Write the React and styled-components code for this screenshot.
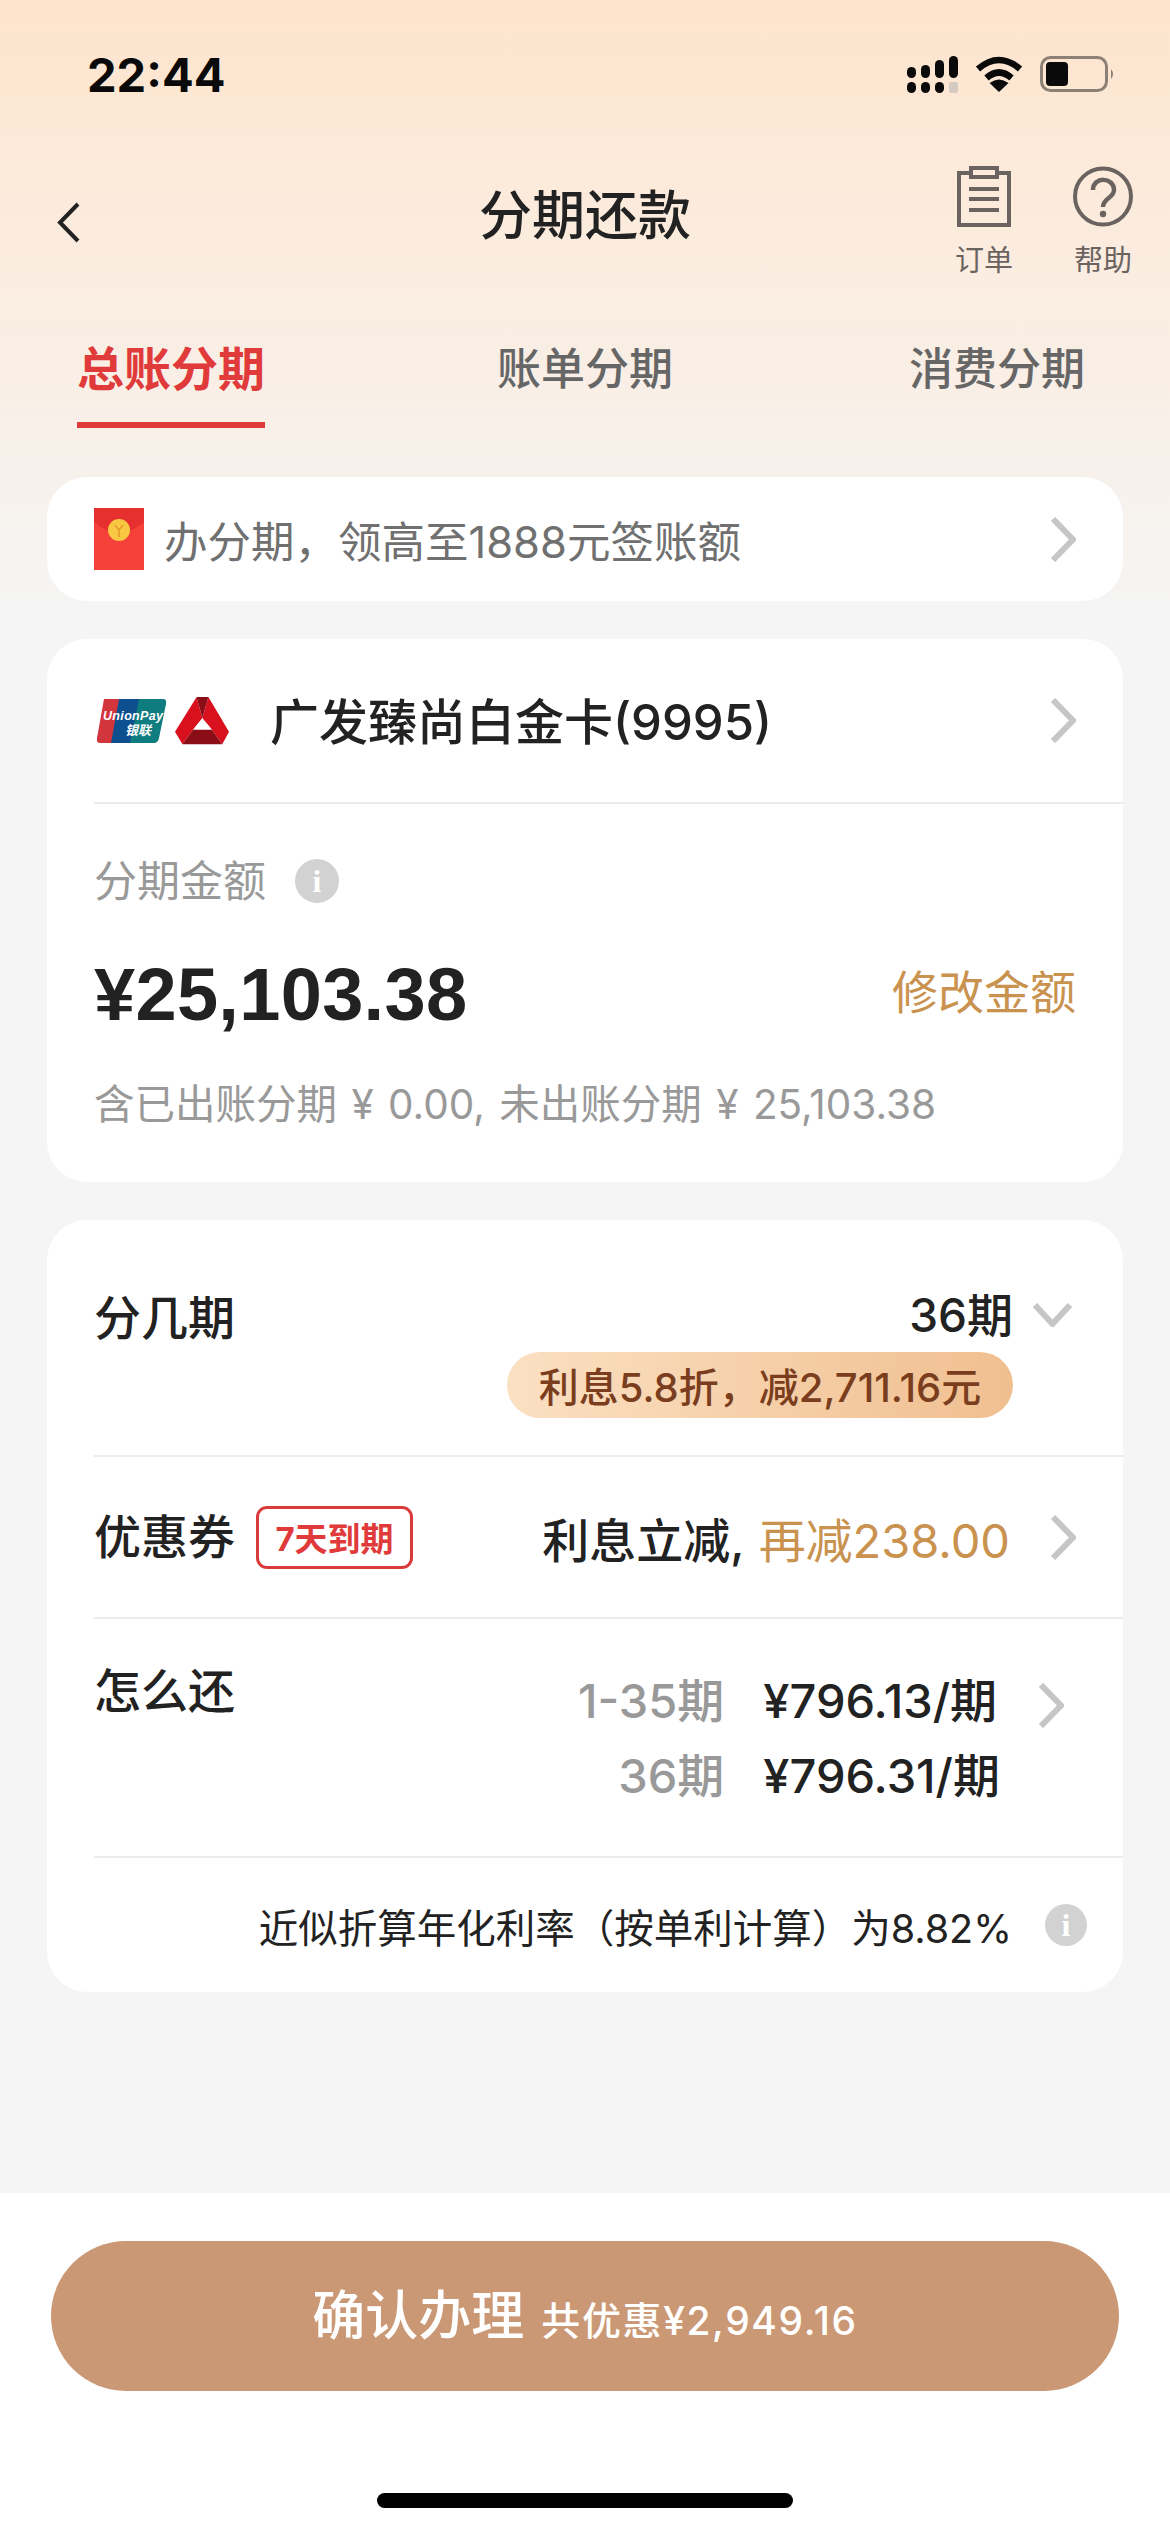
import React from 'react';
import styled, { createGlobalStyle } from 'styled-components';

const GlobalStyle = createGlobalStyle`
  html, body { margin: 0; padding: 0; background: #f5f5f5; }
  * { box-sizing: border-box; }
  body { font-family: Inter, "Noto Sans CJK SC", sans-serif; color: #222; }
`;

const Page = styled.div`
  width: 1170px;
  height: 2532px;
  display: flex;
  flex-direction: column;
  background: linear-gradient(#fde4cc 0, #fcebdc 200px, #f8f0e9 430px, #f5f5f5 620px);
`;

const StatusBar = styled.div`
  height: 148px;
  display: flex;
  align-items: center;
  justify-content: space-between;
  padding: 0 55px 0 87px;
`;

const Clock = styled.div`
  font-size: 47px;
  font-weight: 700;
  color: #0a0a0a;
`;

const StatusIcons = styled.div`
  display: flex;
  align-items: center;
  gap: 17px;
`;

const NavBar = styled.div`
  height: 134px;
  display: grid;
  grid-template-columns: 1fr auto 1fr;
  align-items: center;
  padding: 0 38px;
`;

const BackButton = styled.div`
  margin: 14px 0 0 19px;
`;

const Title = styled.div`
  margin-bottom: 6px;
  font-size: 53px;
  font-weight: 500;
  color: #222;
`;

const NavActions = styled.div`
  align-self: start;
  padding-top: 18px;
  display: flex;
  justify-content: flex-end;
  gap: 61px;
`;

const NavAction = styled.div`
  width: 58px;
  display: flex;
  flex-direction: column;
  align-items: center;
  gap: 18px;
  font-size: 29px;
  line-height: 32px;
  color: #6b6360;
`;

const Tabs = styled.div`
  display: flex;
  padding-left: 77px;
`;

const Tab = styled.div`
  height: 146px;
  margin-left: ${p => p.$gap || 0}px;
  padding-top: 64px;
  line-height: 46px;
  font-size: ${p => (p.$active ? 47 : 44)}px;
  font-weight: ${p => (p.$active ? 700 : 500)};
  color: ${p => (p.$active ? '#e03a3a' : '#666')};
  border-bottom: 6px solid ${p => (p.$active ? '#e03a3a' : 'transparent')};
`;

const Content = styled.div`
  flex: 1;
  display: flex;
  flex-direction: column;
  gap: 38px;
  padding: 49px 47px 0;
`;

const Card = styled.div`
  background: #fff;
  border-radius: 40px;
  padding-left: ${p => (p.$flush ? 47 : 0)}px;
`;

const PromoRow = styled.div`
  height: 124px;
  display: flex;
  align-items: center;
  padding: 0 47px;
  font-size: 43.5px;
  color: #707070;
`;

const PromoText = styled.div`
  flex: 1;
  margin-left: 20px;
`;

const BankRow = styled.div`
  height: 165px;
  display: flex;
  align-items: center;
  padding: 0 47px 0 3px;
  border-bottom: 2px solid #ececec;
`;

const Logos = styled.div`
  display: flex;
  align-items: center;
  gap: 8px;
  margin-right: 41px;
`;

const BankName = styled.div`
  flex: 1;
  margin-top: -4px;
  font-size: 49px;
  font-weight: 500;
  color: #222;
`;

const AmountBox = styled.div`
  padding: 55px 47px 55px 0;
`;

const LabelRow = styled.div`
  display: flex;
  align-items: center;
  gap: 29px;
  font-size: 43px;
  line-height: 44px;
  color: #999;
`;

const InfoDot = styled.span`
  flex: none;
  width: ${p => p.$size}px;
  height: ${p => p.$size}px;
  border-radius: 50%;
  background: #d2d2d2;
  color: #fff;
  display: flex;
  align-items: center;
  justify-content: center;
  font-family: "Liberation Serif", serif;
  font-weight: 700;
  font-size: 32px;
`;

const AmountRow = styled.div`
  display: flex;
  align-items: center;
  justify-content: space-between;
  margin-top: 46px;
  height: 80px;
`;

const Amount = styled.div`
  padding-top: 10px;
  font-family: "Liberation Sans", sans-serif;
  font-size: 74px;
  font-weight: 700;
  letter-spacing: 0.3px;
  color: #222;
`;

const EditLink = styled.div`
  font-size: 46px;
  color: #c9924f;
`;

const AmountNote = styled.div`
  margin-top: 54px;
  font-size: 40.5px;
  word-spacing: 3px;
  line-height: 44px;
  color: #999;
  white-space: nowrap;
`;

const RowLabel = styled.div`
  font-size: 47px;
  font-weight: 500;
  line-height: 50px;
  color: #222;
`;

const TermRow = styled.div`
  display: flex;
  justify-content: space-between;
  padding: 70px 51px 37px 0;
  border-bottom: 2px solid #ececec;
`;

const TermLabel = styled(RowLabel)`
  margin-top: 3px;
`;

const TermValue = styled.div`
  display: flex;
  flex-direction: column;
  align-items: flex-end;
`;

const TermLine = styled.div`
  display: flex;
  align-items: center;
  gap: 20px;
  font-size: 46px;
  font-weight: 500;
  line-height: 50px;
`;

const DiscountPill = styled.div`
  margin-top: 12px;
  margin-right: 59px;
  height: 66px;
  width: 506px;
  border-radius: 33px;
  display: flex;
  align-items: center;
  justify-content: center;
  font-size: 40px;
  font-weight: 500;
  color: #7a3e1e;
  background: linear-gradient(90deg, #fbe0c2, #f0bf90);
`;

const CouponRow = styled.div`
  height: 162px;
  display: flex;
  align-items: center;
  padding-right: 47px;
  border-bottom: 2px solid #ececec;
`;

const ExpiryBadge = styled.div`
  margin-left: 21px;
  width: 157px;
  height: 63px;
  border: 3px solid #d93b3b;
  border-radius: 11px;
  display: flex;
  align-items: center;
  justify-content: center;
  font-size: 33px;
  font-weight: 700;
  color: #e03a3a;
`;

const CouponValue = styled.div`
  margin-left: auto;
  margin-right: 40px;
  font-size: 47px;
  font-weight: 500;
  color: #222;
`;

const CouponSaving = styled.span`
  margin-left: 14px;
  font-weight: 400;
  color: #c9924f;
`;

const RepayRow = styled.div`
  height: 239px;
  display: flex;
  padding: 47px 59px 0 0;
  border-bottom: 2px solid #ececec;
`;

const RepayGrid = styled.div`
  margin: 10px 38px 0 auto;
  display: grid;
  grid-template-columns: auto auto;
  grid-auto-rows: 75px;
  column-gap: 39px;
  font-size: 47px;
  line-height: 50px;
  font-weight: 500;
`;

const RepayPeriod = styled.div`
  text-align: right;
  color: #999;
`;

const RepayAmount = styled.div`
  color: #222;
`;

const RepayChevron = styled.div`
  margin-top: 17px;
`;

const RateRow = styled.div`
  height: 134px;
  display: flex;
  align-items: center;
  justify-content: flex-end;
  gap: 33px;
  padding-right: 36px;
  font-size: 39.5px;
  color: #222;
`;

const BottomBar = styled.div`
  height: 339px;
  background: #fff;
  padding: 48px 51px 0;
`;

const ConfirmButton = styled.div`
  height: 150px;
  border-radius: 75px;
  background: #cb9875;
  color: #fff;
  display: flex;
  align-items: baseline;
  justify-content: center;
  gap: 17px;
  line-height: 150px;
  font-size: 39px;
  font-weight: 500;
  letter-spacing: 1.6px;
`;

const ConfirmLabel = styled.span`
  font-size: 53px;
  letter-spacing: 0;
`;

const HomeIndicator = styled.div`
  width: 416px;
  height: 15px;
  margin: 102px auto 0;
  border-radius: 8px;
  background: #000;
`;

const Chevron = ({ dir = 'right', size = 45 }) => {
  const isDown = dir === 'down';
  return (
    <svg
      width={isDown ? 39 : 26}
      height={isDown ? 24 : size}
      viewBox={isDown ? '0 0 39 24' : '0 0 26 45'}
      fill="none"
      stroke="#c6c6c6"
      strokeWidth="6"
      style={{ flex: 'none', display: 'block' }}
    >
      {isDown ? <path d="M2 2 L19.5 21 L37 2" /> : <path d="M3 2 L23 22.5 L3 43" />}
    </svg>
  );
};

const SignalIcon = () => (
  <svg width="51" height="37" viewBox="0 0 51 37" style={{ display: 'block' }}>
    <rect x="0" y="11" width="9" height="11" rx="4.5" fill="#0a0a0a" />
    <rect x="14" y="9" width="9" height="13" rx="4.5" fill="#0a0a0a" />
    <rect x="28" y="4" width="9" height="18" rx="4.5" fill="#0a0a0a" />
    <rect x="42" y="0" width="9" height="22" rx="4.5" fill="#0a0a0a" />
    <rect x="0" y="26" width="9" height="11" rx="4.5" fill="#0a0a0a" />
    <rect x="14" y="26" width="9" height="11" rx="4.5" fill="#0a0a0a" />
    <rect x="28" y="26" width="9" height="11" rx="4.5" fill="#0a0a0a" />
    <rect x="42" y="26" width="9" height="11" rx="2" fill="#d4cbc3" />
  </svg>
);

const WifiIcon = () => (
  <svg width="48" height="36" viewBox="0 0 48 36" fill="none" style={{ display: 'block' }}>
    <path d="M3 13 Q24 -5 45 13" stroke="#0a0a0a" strokeWidth="6.5" />
    <path d="M11.5 22 Q24 11 36.5 22" stroke="#0a0a0a" strokeWidth="6.5" />
    <path d="M24 36 L14.5 27 Q24 20 33.5 27 Z" fill="#0a0a0a" />
  </svg>
);

const BatteryIcon = () => (
  <svg width="75" height="36" viewBox="0 0 75 36" style={{ display: 'block' }}>
    <rect x="1.5" y="1.5" width="65" height="33" rx="9" fill="none" stroke="#8d8074" strokeWidth="3" />
    <rect x="6" y="6" width="22" height="24" rx="4" fill="#0a0a0a" />
    <path d="M71 13 Q75 18 71 23 Z" fill="#8d8074" />
  </svg>
);

const BackIcon = () => (
  <svg width="23" height="41" viewBox="0 0 23 41" fill="none" stroke="#222" strokeWidth="4" style={{ display: 'block' }}>
    <path d="M21 2 L3 20.5 L21 39" />
  </svg>
);

const OrderIcon = () => (
  <svg width="54" height="61" viewBox="0 0 54 61" fill="none" stroke="#6b6360" strokeWidth="4" style={{ flex: 'none', display: 'block' }}>
    <path d="M14 7 H2 V59 H52 V7 H40" />
    <rect x="14" y="2" width="26" height="9" />
    <path d="M12 23 H42 M12 33 H42 M12 44 H42" />
  </svg>
);

const HelpIcon = () => (
  <svg width="60" height="61" viewBox="0 0 60 61" fill="none" stroke="#6b6360" strokeWidth="4" style={{ flex: 'none', display: 'block' }}>
    <circle cx="30" cy="30.5" r="28" />
    <path d="M20 24 C20 10 41 11 41 24 C41 32 30 32 30 41" strokeWidth="4.5" />
    <circle cx="30" cy="48" r="3.2" fill="#6b6360" stroke="none" />
  </svg>
);

const RedPacket = () => (
  <svg width="50" height="62" viewBox="0 0 50 62" style={{ display: 'block', flex: 'none' }}>
    <rect width="50" height="62" fill="#f6413b" />
    <path d="M0 0 H50 V14 Q25 36 0 14 Z" fill="#e5302f" />
    <circle cx="25" cy="22" r="11" fill="#f9c843" />
    <path d="M21 17 L25 22 L29 17 M25 22 V29" stroke="#e89a2a" strokeWidth="1.6" fill="none" />
  </svg>
);

const UnionPayLogo = () => (
  <svg width="70" height="44" viewBox="0 0 70 44" style={{ display: 'block' }}>
    <path d="M7 0 H30 L22 44 H3 Q-1 44 0 39 Z" fill="#d2353c" />
    <path d="M22 0 H48 L40 44 H14 Z" fill="#0d4f8f" />
    <path d="M42 0 H66 Q70 0 69 5 L62 39 Q61 44 57 44 H33 Z" fill="#0f7c80" />
    <text x="6" y="21" fontFamily="Liberation Sans" fontSize="12.5" fontWeight="700" fontStyle="italic" fill="#fff" textLength="60">UnionPay</text>
    <text x="28" y="36" fontFamily="Noto Sans CJK SC" fontSize="13" fontWeight="700" fontStyle="italic" fill="#fff">银联</text>
  </svg>
);

const BankLogo = () => (
  <svg width="54" height="48" viewBox="0 0 160 142" style={{ display: 'block' }}>
    <path d="M64 0 L81 63 L54 96 L22 140 L0 103 Z" fill="#d9111f" />
    <path d="M99 0 L160 103 L140 140 L109 96 L81 63 Z" fill="#d9111f" />
    <path d="M64 0 H99 L81 63 Z" fill="#8b0d16" />
    <path d="M54 96 H109 L140 140 H22 Z" fill="#8b0d16" />
    <path d="M81 63 L54 96 H109 Z" fill="#fff" />
  </svg>
);

export default function App() {
  return (
    <Page>
      <GlobalStyle />
      <StatusBar>
        <Clock>22:44</Clock>
        <StatusIcons>
          <SignalIcon />
          <WifiIcon />
          <BatteryIcon />
        </StatusIcons>
      </StatusBar>

      <NavBar>
        <BackButton>
          <BackIcon />
        </BackButton>
        <Title>分期还款</Title>
        <NavActions>
          <NavAction>
            <OrderIcon />
            订单
          </NavAction>
          <NavAction>
            <HelpIcon />
            帮助
          </NavAction>
        </NavActions>
      </NavBar>

      <Tabs>
        <Tab $active>总账分期</Tab>
        <Tab $gap={232}>账单分期</Tab>
        <Tab $gap={236}>消费分期</Tab>
      </Tabs>

      <Content>
        <Card>
          <PromoRow>
            <RedPacket />
            <PromoText>办分期，领高至1888元签账额</PromoText>
            <Chevron />
          </PromoRow>
        </Card>

        <Card $flush>
          <BankRow>
            <Logos>
              <UnionPayLogo />
              <BankLogo />
            </Logos>
            <BankName>广发臻尚白金卡(9995)</BankName>
            <Chevron />
          </BankRow>
          <AmountBox>
            <LabelRow>
              分期金额
              <InfoDot $size={44}>i</InfoDot>
            </LabelRow>
            <AmountRow>
              <Amount>¥25,103.38</Amount>
              <EditLink>修改金额</EditLink>
            </AmountRow>
            <AmountNote>含已出账分期 ¥ 0.00, 未出账分期 ¥ 25,103.38</AmountNote>
          </AmountBox>
        </Card>

        <Card $flush>
          <TermRow>
            <TermLabel>分几期</TermLabel>
            <TermValue>
              <TermLine>
                36期
                <Chevron dir="down" />
              </TermLine>
              <DiscountPill>利息5.8折，减2,711.16元</DiscountPill>
            </TermValue>
          </TermRow>

          <CouponRow>
            <RowLabel>优惠券</RowLabel>
            <ExpiryBadge>7天到期</ExpiryBadge>
            <CouponValue>
              利息立减,
              <CouponSaving>再减238.00</CouponSaving>
            </CouponValue>
            <Chevron />
          </CouponRow>

          <RepayRow>
            <RowLabel>怎么还</RowLabel>
            <RepayGrid>
              <RepayPeriod>1-35期</RepayPeriod>
              <RepayAmount>¥796.13/期</RepayAmount>
              <RepayPeriod>36期</RepayPeriod>
              <RepayAmount>¥796.31/期</RepayAmount>
            </RepayGrid>
            <RepayChevron>
              <Chevron />
            </RepayChevron>
          </RepayRow>

          <RateRow>
            近似折算年化利率（按单利计算）为8.82%
            <InfoDot $size={42}>i</InfoDot>
          </RateRow>
        </Card>
      </Content>

      <BottomBar>
        <ConfirmButton>
          <ConfirmLabel>确认办理</ConfirmLabel>
          共优惠¥2,949.16
        </ConfirmButton>
        <HomeIndicator />
      </BottomBar>
    </Page>
  );
}
